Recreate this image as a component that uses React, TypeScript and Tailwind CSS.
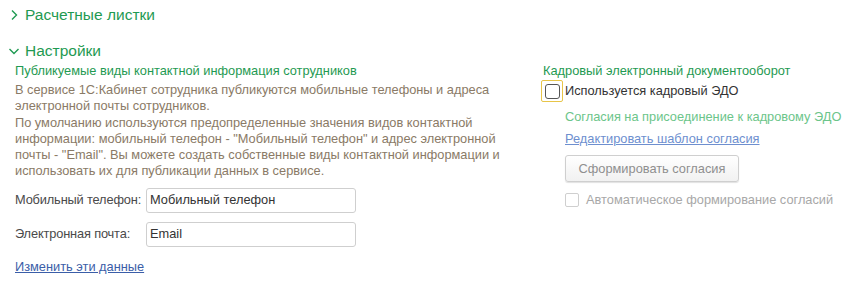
import React from 'react';

const Chevron: React.FC<{ open?: boolean }> = ({ open }) => (
  <svg width="12" height="12" viewBox="0 0 12 12" className="shrink-0">
    {open ? (
      <path d="M1.5 4 L6 8.5 L10.5 4" fill="none" stroke="#1f9a52" strokeWidth="1.4" />
    ) : (
      <path d="M4 1.5 L8.5 6 L4 10.5" fill="none" stroke="#1f9a52" strokeWidth="1.4" />
    )}
  </svg>
);

const Field: React.FC<{ label: string; value: string }> = ({ label, value }) => (
  <div className="flex items-center">
    <span className="w-[131px] text-[#4a4a4a] tracking-[-0.15px]">{label}</span>
    <div className="w-[210px] h-[25px] border border-[#cfcfcf] rounded-[3px] bg-white flex items-center px-[3px] text-[#333]">
      {value}
    </div>
  </div>
);

export default function App() {
  return (
    <div className="w-[862px] h-[284px] bg-white text-[12.8px] leading-[16px] overflow-hidden" style={{ fontFamily: '"Liberation Sans", Arial, sans-serif' }}>
      <div className="flex items-center gap-[5px] pl-[8px] pt-[7px] h-[22px] text-[15.5px] text-[#1f9a52]">
        <Chevron />
        <span>Расчетные листки</span>
      </div>

      <div className="flex items-center gap-[5px] pl-[8px] mt-[18px] h-[22px] text-[15.5px] text-[#1f9a52]">
        <Chevron open />
        <span>Настройки</span>
      </div>

      <div className="flex pl-[15px] mt-[1px]">
        {/* Left column */}
        <div className="w-[526px]">
          <div className="text-[#1f9a52] h-[16px]">Публикуемые виды контактной информация сотрудников</div>
          <p className="text-[#8a7a66] mt-[3px] leading-[16.3px]">
            В сервисе 1С:Кабинет сотрудника публикуются мобильные телефоны и адреса<br />
            электронной почты сотрудников.<br />
            По умолчанию используются предопределенные значения видов контактной<br />
            информации: мобильный телефон - "Мобильный телефон" и адрес электронной<br />
            почты - "Email". Вы можете создать собственные виды контактной информации и<br />
            использовать их для публикации данных в сервисе.
          </p>
          <div className="flex flex-col gap-[9px] mt-[8px]">
            <Field label="Мобильный телефон:" value="Мобильный телефон" />
            <Field label="Электронная почта:" value="Email" />
          </div>
          <a className="block mt-[12px] text-[#3b5ea8] underline">Изменить эти данные</a>
        </div>

        {/* Right column */}
        <div className="flex flex-col">
          <div className="text-[#1f9a52] h-[16px] pl-[2px]">Кадровый электронный документооборот</div>
          <div className="flex items-center mt-[1px]">
            <div className="w-[22px] h-[22px] border border-[#e8c548] rounded-[2px] flex items-center justify-center">
              <div className="w-[15px] h-[15px] border border-[#555] rounded-[3px] bg-white" />
            </div>
            <span className="ml-[2px] text-[#333]">Используется кадровый ЭДО</span>
          </div>
          <div className="pl-[24px] flex flex-col">
            <div className="mt-[7px] text-[#6cc58a]">Согласия на присоединение к кадровому ЭДО</div>
            <a className="mt-[6px] text-[#6e8fcf] underline">Редактировать шаблон согласия</a>
            <div className="mt-[8px] w-[174px] h-[27px] border border-[#cfcfcf] rounded-[3px] bg-gradient-to-b from-white to-[#f1f1f1] flex items-center justify-center text-[#8f8f8f] shadow-[0_1px_1px_rgba(0,0,0,0.12)]">
              Сформировать согласия
            </div>
            <div className="flex items-center mt-[10px]">
              <div className="w-[14px] h-[14px] border border-[#cfcfcf] rounded-[2px] bg-white" />
              <span className="ml-[7px] text-[#a8a8a8]">Автоматическое формирование согласий</span>
            </div>
          </div>
        </div>
      </div>
    </div>
  );
}
